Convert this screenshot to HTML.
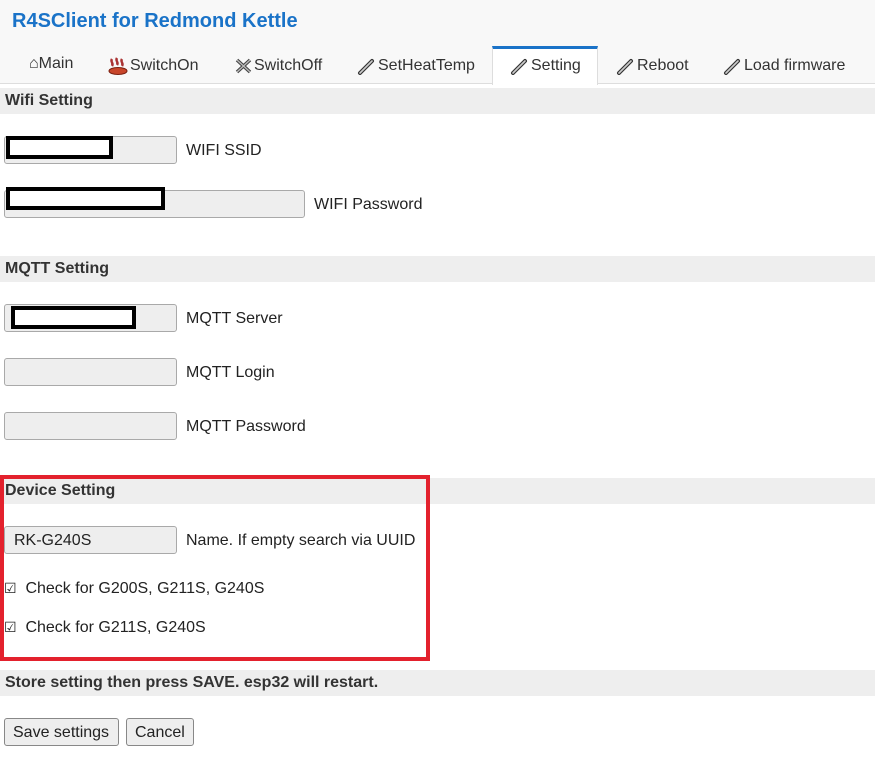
<!DOCTYPE html>
<html><head><meta charset="utf-8"><style>
*{box-sizing:border-box;margin:0;padding:0}
body{width:875px;height:758px;background:#fff;font-family:"Liberation Sans",Arial,sans-serif;color:#222;position:relative;overflow:hidden;font-size:16px}
.a{position:absolute;white-space:nowrap}
.top{left:0;top:0;width:875px;height:84px;background:#f8f8f8;border-bottom:1px solid #ddd}
.title{left:12px;top:10px;font-size:20px;font-weight:bold;color:#1a73c8}
.tab{top:57px;font-size:16px;color:#333;display:flex;align-items:center}
.tab svg{margin-right:1px}
.act{left:492px;top:46px;width:106px;height:39px;background:#fff;border:1px solid #ddd;border-top:3px solid #1a73c8;border-bottom:none}
.sec{left:0;width:875px;height:26px;background:#eee;font-weight:bold;font-size:16px;color:#333;padding:4px 0 0 5px}
.in{left:4px;height:28px;background:#eee;border:1px solid #a9a9a9;border-radius:3px;padding:5px 9px;font-size:16px}
.lb{font-size:16px}
.red{border:4px solid #000;background:#fff}
.btn{top:718px;height:28px;background:#eee;border:1px solid #888;border-radius:3px;padding:5px 8px;font-size:16px}
</style></head><body>
<div class="a top"></div>
<div class="a title">R4SClient for Redmond Kettle</div>
<div class="a act"></div>
<div class="a tab" style="left:29px;top:55px">⌂Main</div>
<div class="a tab" style="left:108px"><svg width="21" height="18" viewBox="0 0 21 18"><path d="M4 2c-2 3 2 4 0 7M9 1c-2 3 2 4 0 7M14 2c-2 3 2 4 0 7" stroke="#a33" stroke-width="2.5" fill="none"/><ellipse cx="10" cy="14" rx="9" ry="3.5" fill="#c8452a" stroke="#7a2010"/></svg>SwitchOn</div>
<div class="a tab" style="left:234px"><svg width="19" height="18" viewBox="0 0 19 18"><path d="M3 3L16 15M16 3L3 15" stroke="#444" stroke-width="3.5"/><path d="M3 3L16 15M16 3L3 15" stroke="#bbb" stroke-width="1.3"/></svg>SwitchOff</div>
<div class="a tab" style="left:357px"><svg width="20" height="18" viewBox="0 0 20 18"><path d="M3 16L15 4" stroke="#333" stroke-width="4" stroke-linecap="round"/><path d="M3 16L15 4" stroke="#ccc" stroke-width="1.6" stroke-linecap="round"/></svg>SetHeatTemp</div>
<div class="a tab" style="left:510px"><svg width="20" height="18" viewBox="0 0 20 18"><path d="M3 16L15 4" stroke="#333" stroke-width="4" stroke-linecap="round"/><path d="M3 16L15 4" stroke="#ccc" stroke-width="1.6" stroke-linecap="round"/></svg>Setting</div>
<div class="a tab" style="left:616px"><svg width="20" height="18" viewBox="0 0 20 18"><path d="M3 16L15 4" stroke="#333" stroke-width="4" stroke-linecap="round"/><path d="M3 16L15 4" stroke="#ccc" stroke-width="1.6" stroke-linecap="round"/></svg>Reboot</div>
<div class="a tab" style="left:723px"><svg width="20" height="18" viewBox="0 0 20 18"><path d="M3 16L15 4" stroke="#333" stroke-width="4" stroke-linecap="round"/><path d="M3 16L15 4" stroke="#ccc" stroke-width="1.6" stroke-linecap="round"/></svg>Load firmware</div>

<div class="a sec" style="top:88px">Wifi Setting</div>
<div class="a in" style="top:136px;width:173px"></div>
<div class="a red" style="left:6px;top:136px;width:107px;height:23px"></div>
<div class="a lb" style="left:186px;top:142px">WIFI SSID</div>
<div class="a in" style="top:190px;width:301px"></div>
<div class="a red" style="left:6px;top:187px;width:159px;height:23px"></div>
<div class="a lb" style="left:314px;top:196px">WIFI Password</div>

<div class="a sec" style="top:256px">MQTT Setting</div>
<div class="a in" style="top:304px;width:173px"></div>
<div class="a red" style="left:11px;top:306px;width:125px;height:23px"></div>
<div class="a lb" style="left:186px;top:310px">MQTT Server</div>
<div class="a in" style="top:358px;width:173px"></div>
<div class="a lb" style="left:186px;top:364px">MQTT Login</div>
<div class="a in" style="top:412px;width:173px"></div>
<div class="a lb" style="left:186px;top:418px">MQTT Password</div>

<div class="a sec" style="top:478px">Device Setting</div>
<div class="a in" style="top:526px;width:173px">RK-G240S</div>
<div class="a lb" style="left:186px;top:532px">Name. If empty search via UUID</div>
<div class="a lb" style="left:4px;top:580px"><span style="font-size:14px">☑</span>&nbsp; Check for G200S, G211S, G240S</div>
<div class="a lb" style="left:4px;top:619px"><span style="font-size:14px">☑</span>&nbsp; Check for G211S, G240S</div>
<div class="a" style="left:0;top:475px;width:430px;height:186px;border:4px solid #e3212d"></div>

<div class="a sec" style="top:670px">Store setting then press SAVE. esp32 will restart.</div>
<div class="a btn" style="left:4px;width:115px">Save settings</div>
<div class="a btn" style="left:126px;width:68px">Cancel</div>
</body></html>
